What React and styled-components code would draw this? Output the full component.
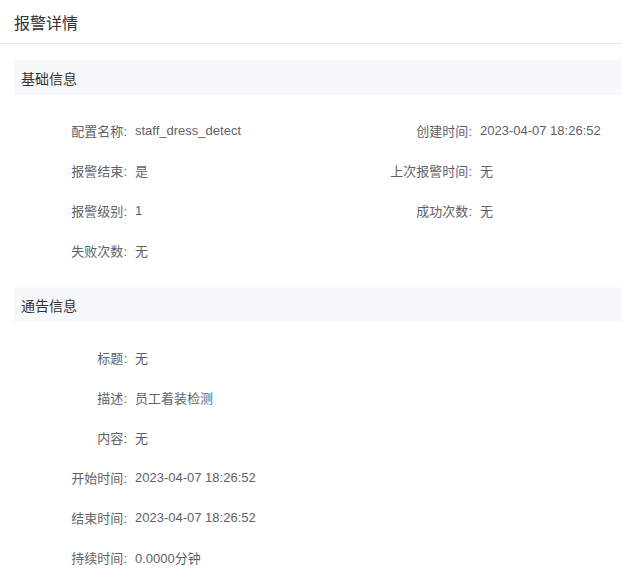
import React from 'react';
import styled, { createGlobalStyle } from 'styled-components';

const GlobalStyle = createGlobalStyle`
  html, body {
    margin: 0;
    padding: 0;
    background: #fff;
    font-family: "Liberation Sans", "Noto Sans CJK SC", sans-serif;
  }
`;

// STYLES
const Page = styled.div`
  width: 622px;
`;

const TitleBar = styled.div`
  height: 43px;
  display: flex;
  align-items: center;
  padding: 0 14px;
  border-bottom: 1px solid #e9ebef;
  font-size: 16px;
  color: #303133;
`;

const Content = styled.div`
  padding: 16px 0 0 14px;
`;

const SectionHead = styled.div`
  height: 35px;
  display: flex;
  align-items: center;
  padding: 0 7px;
  background: #f7f8fa;
  font-size: 14px;
  color: #303133;
`;

const Grid = styled.div`
  display: grid;
  grid-template-columns: ${props => props.cols};
  grid-auto-rows: 40px;
  padding: 15px 0 17px;
`;

const Label = styled.div`
  display: flex;
  align-items: center;
  justify-content: flex-end;
  padding-right: 8px;
  font-size: 13px;
  color: #606266;
  white-space: nowrap;
`;

const Value = styled.div`
  display: flex;
  align-items: center;
  font-size: 13px;
  color: #606266;
  white-space: nowrap;
`;

const basic = [
  ['配置名称', 'staff_dress_detect'],
  ['创建时间', '2023-04-07 18:26:52'],
  ['报警结束', '是'],
  ['上次报警时间', '无'],
  ['报警级别', '1'],
  ['成功次数', '无'],
  ['失败次数', '无'],
];

const notice = [
  ['标题', '无'],
  ['描述', '员工着装检测'],
  ['内容', '无'],
  ['开始时间', '2023-04-07 18:26:52'],
  ['结束时间', '2023-04-07 18:26:52'],
  ['持续时间', '0.0000分钟'],
];

const Fields = ( { items, cols } ) => (
  <Grid cols={cols}>
    {items.map( ( [label, value] ) => (
      <React.Fragment key={label}>
        <Label>{label}:</Label>
        <Value>{value}</Value>
      </React.Fragment>
    ) )}
  </Grid>
);

const App = () => (
  <Page>
    <GlobalStyle />
    <TitleBar>报警详情</TitleBar>
    <Content>
      <SectionHead>基础信息</SectionHead>
      <Fields items={basic} cols="121px 183px 162px 1fr" />
      <SectionHead>通告信息</SectionHead>
      <Fields items={notice} cols="121px 1fr" />
    </Content>
  </Page>
);

export default App;
